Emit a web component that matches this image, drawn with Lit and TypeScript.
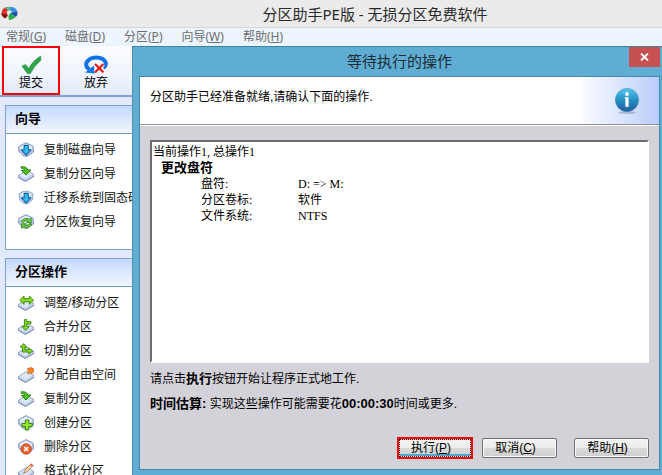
import { LitElement, html, css, svg } from "lit";
import { customElement, property } from "lit/decorators.js";

const slab = svg`
  <path d="M0.5 9.4 L8.6 4.4 L15.5 8.4 L15.5 10.8 L7.4 15.6 L0.5 11.6Z" fill="#8fa6cf" stroke="#7488b5" stroke-width=".8" stroke-linejoin="round"/>
  <path d="M0.9 9.3 L8.6 4.7 L15.1 8.5 L7.4 13Z" fill="#dfe9f8" stroke="#a9bbdd" stroke-width=".6" stroke-linejoin="round"/>
  <path d="M1.2 10.1 L7.4 13.7 L15 9.3" fill="none" stroke="#f3f7fd" stroke-width=".9"/>`;
const drum = svg`
  <path d="M.8 4.5 L8 .6 L15.2 4.2 L15.5 10 L9 14.6 L5 13.6 L.6 9Z" fill="#b4c4e2" stroke="#7f94c0" stroke-width=".9" stroke-linejoin="round"/>
  <path d="M1.6 4.8 L8 1.4 L14.4 4.7 L13.4 8.2 L8 11 L2.4 8Z" fill="#e3ebf9"/>`;
const downBlue = svg`<path d="M6.2 3.4H10.2V7.8H13L8.2 13.2 3.4 7.8H6.2Z" fill="#35bdf0" stroke="#1263a4" stroke-width="1.1" stroke-linejoin="round"/>`;
const dropGreen = svg`<path d="M3.2 .8 C6 .4 9.2 1 9.8 4 H13 L8 9 L3.4 4.4 H6.6 C6.2 2.8 5 2.2 3.2 2.2Z" fill="#4fc018" stroke="#1d7a0a" stroke-width=".9" stroke-linejoin="round"/>`;
const leaf = { fill: "#86d824", line: "#33860c" };

const glyphs: Record<string, unknown> = {
  disk: svg`${drum}${downBlue}`,
  copy: svg`${slab}${dropGreen}`,
  migrate: svg`<path d="M1 3.8 Q8 -1.6 15 3.8 L14.2 10 Q8 17.6 1.8 10Z" fill="#cad7ee" stroke="#8ca0c8" stroke-width=".9"/><path d="M2.2 4.2 Q8 .6 13.8 4.2 Q8 8 2.2 4.2Z" fill="#f1f5fc"/>${downBlue}`,
  recover: svg`${drum}<path d="M2.8 7.4 Q7 2.8 11.6 5.2 L13.2 3.8 V8.6 H8.6 L10 7 Q7.4 6 5.4 8.4Z M14 10 Q9.6 15.6 5.2 12.8 L3.6 14.4 V9.8 H8.2 L6.8 11.4 Q9.2 12.4 11.4 9.8Z" fill="#6bd03c" stroke="#2d7d18" stroke-width=".8" stroke-linejoin="round"/>`,
  move: svg`${slab}<path d="M1.8 5.2 L6 1 V3.6 H11.4 V1 L15.6 5.2 L11.4 9.4 V6.8 H6 V9.4Z" fill="${leaf.fill}" stroke="${leaf.line}" stroke-width=".9" stroke-linejoin="round"/>`,
  merge: svg`${slab}<path d="M6.4 .6 H8.8 V2.6 H13 V4.8 H8.8 V7.6 H11.4 L7.6 11.6 L3.8 7.6 H6.4Z" fill="${leaf.fill}" stroke="${leaf.line}" stroke-width=".9" stroke-linejoin="round"/>`,
  split: svg`${slab}<path d="M5.6 .6 L9 4.2 H6.8 V6.8 H10.6 V4.8 L14.8 8 L10.6 11 V9 H4.4 V4.2 H2.2Z" fill="${leaf.fill}" stroke="${leaf.line}" stroke-width=".9" stroke-linejoin="round"/>`,
  allocate: svg`${slab}<path d="M9 2.2 Q12.4 -.8 15.6 1.6 Q16.2 4.6 14.2 6.4 L12 5.8 L9.2 6.8 L10.8 4.2Z" fill="#f28a2c" stroke="#d0610f" stroke-width=".7"/>`,
  create: svg`${drum}<path d="M7.4 5 H10.8 V8.4 H14.2 V11.6 H10.8 V15 H7.4 V11.6 H4 V8.4 H7.4Z" fill="#9ae62c" stroke="#2c820c" stroke-width="1"/>`,
  remove: svg`${drum}<circle cx="8.2" cy="10" r="5.2" fill="#f0602c" stroke="#c33d12" stroke-width=".8"/><path d="M6.2 8 L10.2 12 M10.2 8 L6.2 12" stroke="#fff" stroke-width="1.7"/>`,
  format: svg`${slab}<path d="M5.6 10 L6.8 7.2 L13 .8 L15.2 2.6 L8.8 9Z" fill="#f4d9a4" stroke="#9a6a48" stroke-width=".8"/><path d="M12 2 L13.2 .8 L15.2 2.6 L14 3.8Z" fill="#dd5a4c"/>`,
};

const wizards = [
  ["disk", "复制磁盘向导"],
  ["copy", "复制分区向导"],
  ["migrate", "迁移系统到固态硬盘"],
  ["recover", "分区恢复向导"],
];
const operations = [
  ["move", "调整/移动分区"],
  ["merge", "合并分区"],
  ["split", "切割分区"],
  ["allocate", "分配自由空间"],
  ["copy", "复制分区"],
  ["create", "创建分区"],
  ["remove", "删除分区"],
  ["format", "格式化分区"],
];
const menus = [["常规", "G"], ["磁盘", "D"], ["分区", "P"], ["向导", "W"], ["帮助", "H"]];

@customElement("task-panel")
class TaskPanel extends LitElement {
  @property() heading = "";
  @property({ attribute: false }) items: string[][] = [];

  static styles = css`
    :host { display: block; border: 1px solid #7da2ce; background: #fff; box-sizing: border-box; }
    .heading {
      margin: 0; height: 27px; padding-left: 9px; line-height: 26px;
      font-size: 13px; font-weight: bold; color: #000;
      background: linear-gradient(#c2d8fd, #d3e2fd 30%, #f1f5fd);
      border-bottom: 1px solid #6e9dca;
    }
    .list { list-style: none; margin: 0; padding: 4px 0 15px; }
    .link {
      display: flex; align-items: center; gap: 10px; height: 24px; padding-left: 12px;
      color: #111; text-decoration: none; white-space: nowrap; line-height: 24px;
    }
    .icon { width: 16px; height: 16px; flex: none; }
  `;

  render() {
    return html`
      <h2 class="heading">${this.heading}</h2>
      <ul class="list">
        ${this.items.map(([icon, label]) => html`
          <li><a class="link" href="#">
            <svg class="icon" viewBox="0 0 16 16" aria-hidden="true">${glyphs[icon]}</svg>
            <span>${label}</span></a></li>`)}
      </ul>`;
  }
}

@customElement("pending-dialog")
class PendingDialog extends LitElement {
  static styles = css`
    :host {
      display: flex; flex-direction: column; box-sizing: border-box;
      background: #60add3; border-top: 1px solid #3d84a0; border-left: 1px solid #5291b2;
      padding: 0 2px 5px 6px; color: #000;
    }
    button { font: inherit; color: inherit; }
    b { font-size: 13px; }
    .titlebar { position: relative; height: 29px; display: flex; align-items: center; justify-content: center; }
    .title { margin: 0; font-size: 15px; font-weight: normal; line-height: 20px; color: #1c2c36; }
    .close {
      position: absolute; top: 0; right: 0; width: 31px; height: 20px; padding: 0; border: 0;
      background: #c75050; display: flex; align-items: center; justify-content: center;
    }
    .client {
      flex: 1; min-height: 0; display: flex; flex-direction: column;
      border: 1px solid #4789a8; background: #d3d2d9;
    }
    .banner {
      height: 48px; flex: none; box-sizing: border-box; display: flex; justify-content: space-between;
      padding: 10px 19px 0 10px; border-bottom: 1px solid #909096; box-shadow: 0 1px #fff;
      background: linear-gradient(90deg, #fff 84%, #d9e3fc 93%, #b9ccfa);
    }
    .banner-text { margin: 0; line-height: 20px; }
    .info { width: 26px; height: 28px; }
    .content { flex: 1; min-height: 0; display: flex; flex-direction: column; padding: 15px 10px 11px 10px; }
    .log {
      flex: 1; min-height: 0; box-sizing: border-box; background: #fff; padding: 2px 1px;
      border: 2px solid; border-color: #6c6c6c #fff #fff #6c6c6c;
      font-family: "Liberation Serif", "Noto Sans CJK SC", serif; line-height: 16px;
    }
    .line { margin: 0; }
    .change { margin: 0; padding-left: 8px; line-height: 16px; }
    .details { margin: 0; padding-left: 48px; display: grid; grid-template-columns: 97px 1fr; }
    .details dd { margin: 0; }
    .note { margin: 0; line-height: 18px; padding-top: 7px; }
    .actions { display: flex; align-items: center; justify-content: flex-end; gap: 17px; padding-top: 25px; }
    .action {
      width: 75px; height: 20px; box-sizing: border-box; padding: 0 8px 0 0; border: 1px solid #707070;
      border-radius: 2px; background: linear-gradient(#f4f4f4, #ececec 50%, #dadada 51%, #cfcfcf);
      line-height: 16px; box-shadow: inset 0 0 0 1px #f8f8f8;
    }
    .primary {
      width: 72px; height: 18px; margin-right: -6px; border: 1px dotted #222; border-radius: 0;
      outline: 2px solid #f00; box-shadow: inset 0 -2px #4ba9cf;
    }
  `;

  render() {
    return html`
      <header class="titlebar">
        <h1 class="title">等待执行的操作</h1>
        <button class="close" aria-label="关闭">
          <svg width="9" height="8" viewBox="0 0 9 8"><path d="M1 .5 L8 7.5 M8 .5 L1 7.5" stroke="#fff" stroke-width="1.8"/></svg>
        </button>
      </header>
      <div class="client">
        <div class="banner">
          <p class="banner-text">分区助手已经准备就绪,请确认下面的操作.</p>
          <svg class="info" viewBox="0 0 26 28" aria-hidden="true">
            <defs><linearGradient id="ball" x1="0" y1="0" x2="0" y2="1">
              <stop offset="0" stop-color="#55c6ea"/><stop offset=".5" stop-color="#2590c6"/><stop offset="1" stop-color="#245b98"/>
            </linearGradient></defs>
            <ellipse cx="13" cy="25.5" rx="9" ry="1.5" fill="#8d9dbb" opacity=".6"/>
            <circle cx="13" cy="13" r="11.6" fill="url(#ball)" stroke="#3d8fbe" stroke-width=".6"/>
            <circle cx="13" cy="7" r="1.9" fill="#fff"/>
            <path d="M10.8 10.2H14.6V19.8H11.4V11.4H10.8Z" fill="#fff"/>
          </svg>
        </div>
        <div class="content">
          <section class="log" aria-label="操作列表">
            <p class="line">当前操作1, 总操作1</p>
            <p class="change"><b>更改盘符</b></p>
            <dl class="details">
              <dt>盘符:</dt><dd>D: =&gt; M:</dd>
              <dt>分区卷标:</dt><dd>软件</dd>
              <dt>文件系统:</dt><dd>NTFS</dd>
            </dl>
          </section>
          <p class="note">请点击<b>执行</b>按钮开始让程序正式地工作.</p>
          <p class="note"><b>时间估算:</b> 实现这些操作可能需要花<b>00:00:30</b>时间或更多.</p>
          <div class="actions">
            <button class="action primary">执行(<u>P</u>)</button>
            <button class="action">取消(<u>C</u>)</button>
            <button class="action">帮助(<u>H</u>)</button>
          </div>
        </div>
      </div>`;
  }
}

@customElement("app-root")
class AppRoot extends LitElement {
  static styles = css`
    :host {
      display: flex; flex-direction: column; position: relative; height: 100vh; overflow: hidden;
      background: #e3e9fc; font-family: "Liberation Sans", "Noto Sans CJK SC", sans-serif; font-size: 12px;
    }
    button { font: inherit; border: 0; background: none; }
    .titlebar {
      height: 27px; flex: none; display: flex; align-items: center; background: #ebebeb;
      border-bottom: 1px solid #d8d6d4;
    }
    .logo { width: 17px; height: 15px; flex: none; margin-left: 1px; }
    .title {
      flex: 1; margin: 0; padding-left: 70px; text-align: center; font-size: 15px; font-weight: normal;
      font-family: "Noto Sans", "Noto Sans CJK SC", sans-serif; line-height: 20px; color: #2a2a2a;
    }
    .menubar {
      height: 18px; flex: none; display: flex; align-items: center; gap: 19px; padding-left: 6px;
      background: #ecf5fd; font-family: "Noto Sans", "Noto Sans CJK SC", sans-serif;
    }
    .menu { padding: 0; color: #6d6d6d; line-height: 18px; }
    .toolbar {
      height: 49px; flex: none; display: flex; gap: 7px; padding-left: 2px;
      background: linear-gradient(#fbfcff, #f2f5fd 50%, #e4eafa); border-bottom: 2px solid #7fa3d6;
    }
    .tool {
      width: 58px; padding: 7px 0 0; display: flex; flex-direction: column; align-items: center;
      box-sizing: border-box; border: 2px solid transparent; color: #000; line-height: 16px;
    }
    .marked { border-color: #f00; }
    .tool-icon { width: 24px; height: 20px; flex: none; }
    .sidebar { width: 200px; flex: none; display: flex; flex-direction: column; gap: 8px; padding: 8px 0 0 5px; }
    .dialog { position: absolute; left: 132px; right: 0; top: 46px; bottom: 0; }
  `;

  render() {
    return html`
      <header class="titlebar">
        <svg class="logo" viewBox="0 0 17 15" aria-hidden="true">
          <path d="M0.4 8 Q.8 1.4 7 .8 L9 6 L5 12.2 Q1 11.6 .4 8Z" fill="#d9301f"/>
          <path d="M.4 7.6 Q.8 10.6 4 12.4 L6.6 9Z" fill="#76150f"/>
          <path d="M4 2 Q10 -.6 14.4 2.2 L9 6Z" fill="#5cbf9a"/>
          <path d="M9 1 Q15.4 1.4 16.4 5.4 L9 7Z" fill="#3f8fe0"/>
          <path d="M16.4 5.4 Q17 9 14.8 11 L9 7Z" fill="#1c4fa6"/>
          <path d="M9 7 L14.6 11 Q12 14 8 14.2 L7.4 10Z" fill="#2faa4b"/>
          <path d="M5.4 5.8 Q8 3.6 11 5.4 L9 7.4 L7 9.4Z" fill="#d8ecf6"/>
        </svg>
        <h1 class="title">分区助手PE版 - 无损分区免费软件</h1>
      </header>
      <nav class="menubar">
        ${menus.map(([name, key]) => html`<button class="menu">${name}(<u>${key}</u>)</button>`)}
      </nav>
      <div class="toolbar">
        <button class="tool marked">
          <svg class="tool-icon" viewBox="0 0 24 20" aria-hidden="true">
            <path d="M3 11 L6.6 9.6 L9.6 13.4 Q13.6 6 21.6 1 L21.8 5.4 Q15 11 11.4 18.6 H8.4Z" fill="#2fa34a" stroke="#258a3d" stroke-width=".6"/>
          </svg>提交
        </button>
        <button class="tool">
          <svg class="tool-icon" viewBox="0 0 24 20" aria-hidden="true">
            <path d="M5.4 14.4 Q1 11.6 2.6 7.4 Q5.4 2.4 12 2.4 Q19.6 2.4 21.6 7.2 Q22.6 10.4 19.4 13" fill="none" stroke="#1273e6" stroke-width="4"/>
            <path d="M1 17.4 L10 10.6 L10.8 18.6Z" fill="#1273e6"/>
            <path d="M11 9 L19.4 17.4 M19.4 9 L11 17.4" stroke="#fff" stroke-width="4"/>
            <path d="M11 9 L19.4 17.4 M19.4 9 L11 17.4" stroke="#d9201c" stroke-width="2.2"/>
          </svg>放弃
        </button>
      </div>
      <aside class="sidebar">
        <task-panel heading="向导" .items=${wizards}></task-panel>
        <task-panel heading="分区操作" .items=${operations}></task-panel>
      </aside>
      <pending-dialog class="dialog" role="dialog" aria-label="等待执行的操作"></pending-dialog>`;
  }
}
